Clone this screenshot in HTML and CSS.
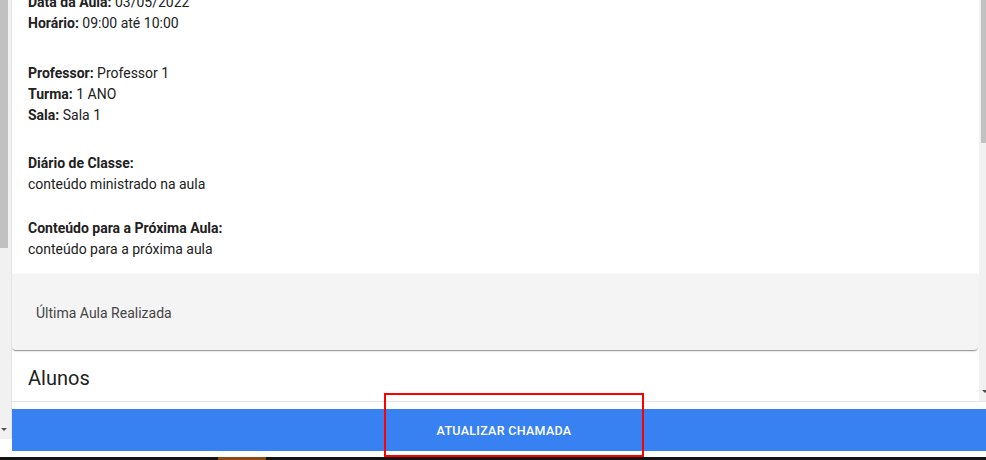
FILE: index.html
```html
<html>
  <head>
    <meta charset="utf-8" />
    <title>Chamada</title>
    <link rel="stylesheet" href="styles.css">
  </head>
  <body>
    <div class="frame">
      <aside class="outer-scroll">
        <div class="outer-track">
          <div class="outer-thumb"></div>
          <div class="arrow"></div>
        </div>
      </aside>

      <div class="app">
        <div class="viewport">
          <div class="scroller">
            <section class="details">
              <p class="group">
                <b>Data da Aula:</b> 03/05/2022<br>
                <b>Horário:</b> 09:00 até 10:00
              </p>
              <p class="group gap-lg">
                <b>Professor:</b> Professor 1<br>
                <b>Turma:</b> 1 ANO<br>
                <b>Sala:</b> Sala 1
              </p>
              <p class="group gap-md">
                <b>Diário de Classe:</b><br>
                conteúdo ministrado na aula
              </p>
              <p class="group gap-sm">
                <b>Conteúdo para a Próxima Aula:</b><br>
                conteúdo para a próxima aula
              </p>
            </section>

            <div class="panel">Última Aula Realizada</div>

            <h2 class="section-title">Alunos</h2>
          </div>
          <div class="vscroll">
            <div class="vthumb"></div>
            <div class="arrow small"></div>
          </div>
        </div>

        <footer class="actions">
          <button class="button save">ATUALIZAR CHAMADA</button>
        </footer>
      </div>
    </div>

    <div class="taskbar">
      <span class="task"></span>
    </div>

    <div class="highlight"></div>
  </body>
</html>
```

FILE: styles.css
```css
html, body {
  height: 100%;
  margin: 0;
}

body {
  display: flex;
  flex-direction: column;
  background-color: #ffffff;
  font-family: Roboto, "Liberation Sans", sans-serif;
  color: #212121;
  overflow: hidden;
}

.frame {
  height: 457px;
  display: flex;
  flex-direction: row;
}

/* page scrollbar on the left edge */
.outer-scroll {
  width: 12px;
  flex: 0 0 12px;
  display: flex;
  flex-direction: column;
}
.outer-track {
  height: 439px;
  background-color: #f1f1f1;
  border-right: 1px solid #e3e3e3;
  display: flex;
  flex-direction: column;
}
.outer-thumb {
  width: 8px;
  height: 248px;
  background-color: #c1c1c1;
}
.arrow {
  margin-top: auto;
  margin-bottom: 8px;
  margin-left: 1px;
  width: 0;
  height: 0;
  border-left: 3px solid transparent;
  border-right: 3px solid transparent;
  border-top: 3px solid #505050;
}

.app {
  flex: 1 1 0;
  display: flex;
  flex-direction: column;
  min-width: 0;
}

.viewport {
  height: 401px;
  display: flex;
  flex-direction: row;
  overflow: hidden;
}

.scroller {
  flex: 1 1 0;
  padding-right: 1px;
  overflow: hidden;
}

/* scrolled down a little, so the first line is cut at the top */
.details {
  margin-top: -8px;
  padding: 0 16px 14px;
  font-size: 14px;
  line-height: 21px;
}
.group {
  margin: 0;
}
.group b {
  font-weight: 700;
}
.gap-lg {
  margin-top: 29px;
}
.gap-md {
  margin-top: 27px;
}
.gap-sm {
  margin-top: 23px;
}

.panel {
  height: 76px;
  padding: 2px 24px 0;
  display: flex;
  align-items: center;
  box-sizing: border-box;
  background-color: #f4f4f4;
  border-radius: 0 0 4px 4px;
  box-shadow: 0 2px 1px -1px rgba(0, 0, 0, 0.25), 0 1px 1px 0 rgba(0, 0, 0, 0.14), 0 1px 3px 0 rgba(0, 0, 0, 0.12);
  font-size: 14px;
  color: #444444;
}

.section-title {
  margin: 14px 0 0;
  padding-left: 16px;
  font-size: 20px;
  line-height: 28px;
  font-weight: 400;
  color: #222222;
}

/* inner scrollbar */
.vscroll {
  width: 7px;
  flex: 0 0 7px;
  background-color: #f1f1f1;
  display: flex;
  flex-direction: column;
  align-items: flex-end;
}
.vthumb {
  width: 5px;
  height: 143px;
  background-color: #c1c1c1;
}
.arrow.small {
  margin-bottom: 8px;
  margin-right: -2px;
}

.actions {
  flex: 1 1 0;
  border-top: 1px solid #e6e6e6;
  padding: 7px 0 6px;
  display: flex;
}

.button {
  flex: 1 1 0;
  border: none;
  background-color: #3881f2;
  color: #ffffff;
  font-family: Roboto, "Liberation Sans", sans-serif;
  font-size: 12.5px;
  font-weight: 500;
  letter-spacing: 0.3px;
  padding: 0 0 0 10px;
  cursor: pointer;
}

.taskbar {
  height: 3px;
  background-color: #141414;
  display: flex;
}
.task {
  margin-left: 218px;
  width: 48px;
  background-color: #8a4a18;
}

.highlight {
  position: absolute;
  left: 384px;
  top: 393px;
  width: 256px;
  height: 60px;
  border: 2px solid #ff0000;
}
```
